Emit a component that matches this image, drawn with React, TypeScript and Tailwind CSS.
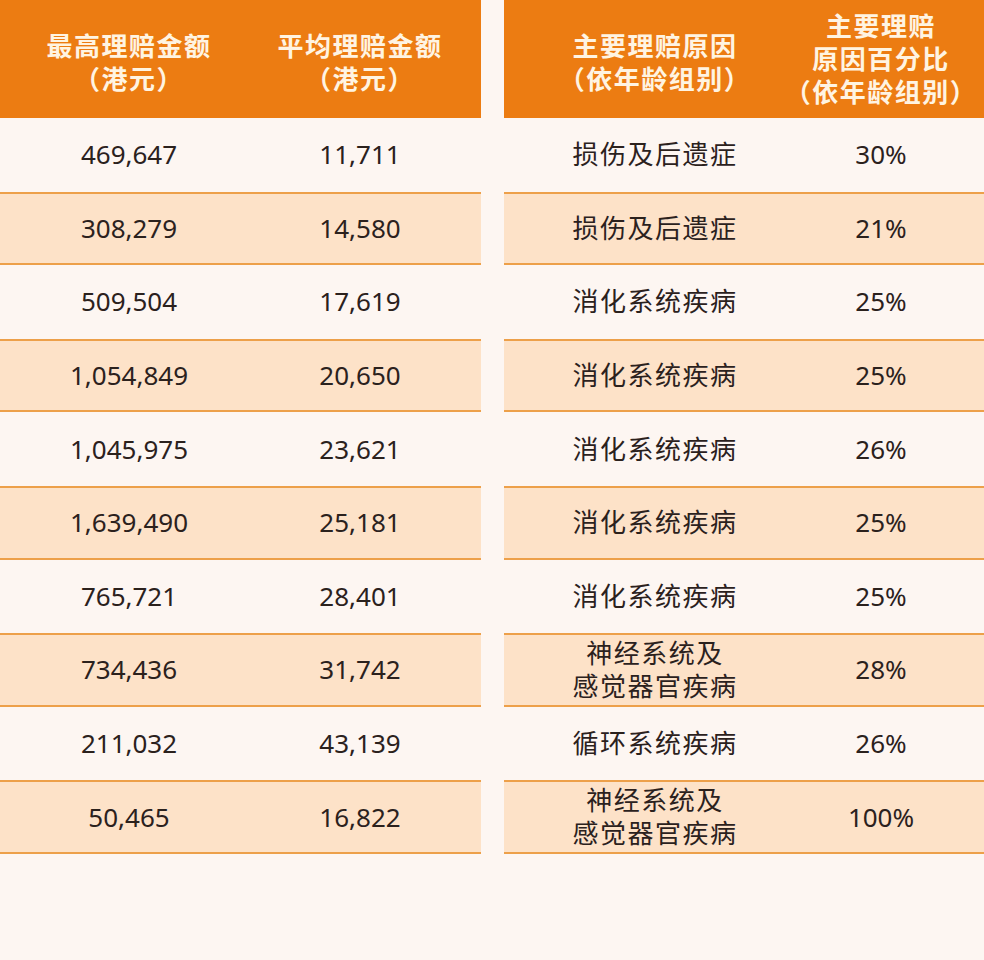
import React from 'react'

const font = { fontFamily: '"Noto Sans", "Noto Sans CJK SC", sans-serif' }

const leftRows = [
  ['469,647', '11,711'],
  ['308,279', '14,580'],
  ['509,504', '17,619'],
  ['1,054,849', '20,650'],
  ['1,045,975', '23,621'],
  ['1,639,490', '25,181'],
  ['765,721', '28,401'],
  ['734,436', '31,742'],
  ['211,032', '43,139'],
  ['50,465', '16,822'],
]

const rightRows: [string[], string][] = [
  [['损伤及后遗症'], '30%'],
  [['损伤及后遗症'], '21%'],
  [['消化系统疾病'], '25%'],
  [['消化系统疾病'], '25%'],
  [['消化系统疾病'], '26%'],
  [['消化系统疾病'], '25%'],
  [['消化系统疾病'], '25%'],
  [['神经系统及', '感觉器官疾病'], '28%'],
  [['循环系统疾病'], '26%'],
  [['神经系统及', '感觉器官疾病'], '100%'],
]

function rowClass(i: number) {
  // every second row is shaded peach with orange rules above and below
  return i % 2 === 1
    ? 'flex h-[73.6px] items-center bg-[#fde2c8] border-y-2 border-[#eda04a]'
    : 'flex h-[73.6px] items-center'
}

function HeadCell({ lines, className }: { lines: string[]; className: string }) {
  return (
    <div className={`flex flex-col items-center justify-center text-center ${className}`}>
      {lines.map((l) => (
        <span
          key={l}
          className="block whitespace-nowrap text-[26px] font-bold leading-[33px] tracking-[1.5px] text-[#fff4e2]"
        >
          {l}
        </span>
      ))}
    </div>
  )
}

export default function App() {
  return (
    <div className="min-h-[960px] w-[984px] bg-[#fdf6f2] text-[#2b211d]" style={font}>
      <div className="flex gap-[23px]">
        {/* Left table: amounts */}
        <div className="w-[481px]">
          <div className="flex h-[118px] bg-[#ec7c12]">
            <HeadCell lines={['最高理赔金额', '（港元）']} className="w-[258px] pt-[8px]" />
            <HeadCell lines={['平均理赔金额', '（港元）']} className="w-[204px] pt-[8px]" />
          </div>
          {leftRows.map(([a, b], i) => (
            <div key={i} className={rowClass(i)}>
              <div className="w-[258px] text-center text-[26px]">{a}</div>
              <div className="w-[204px] text-center text-[26px]">{b}</div>
            </div>
          ))}
        </div>

        {/* Right table: causes */}
        <div className="w-[480px]">
          <div className="flex h-[118px] bg-[#ec7c12]">
            <HeadCell lines={['主要理赔原因', '（依年龄组别）']} className="w-[302px] pt-[8px]" />
            <HeadCell
              lines={['主要理赔', '原因百分比', '（依年龄组别）']}
              className="w-[150px] pt-[1px]"
            />
          </div>
          {rightRows.map(([cause, pct], i) => (
            <div key={i} className={rowClass(i)}>
              <div className="flex w-[302px] flex-col items-center text-center">
                {cause.map((c) => (
                  <span key={c} className="block text-[26px] leading-[33px] tracking-[1.5px]">
                    {c}
                  </span>
                ))}
              </div>
              <div className="w-[150px] text-center text-[26px]">{pct}</div>
            </div>
          ))}
        </div>
      </div>
    </div>
  )
}
